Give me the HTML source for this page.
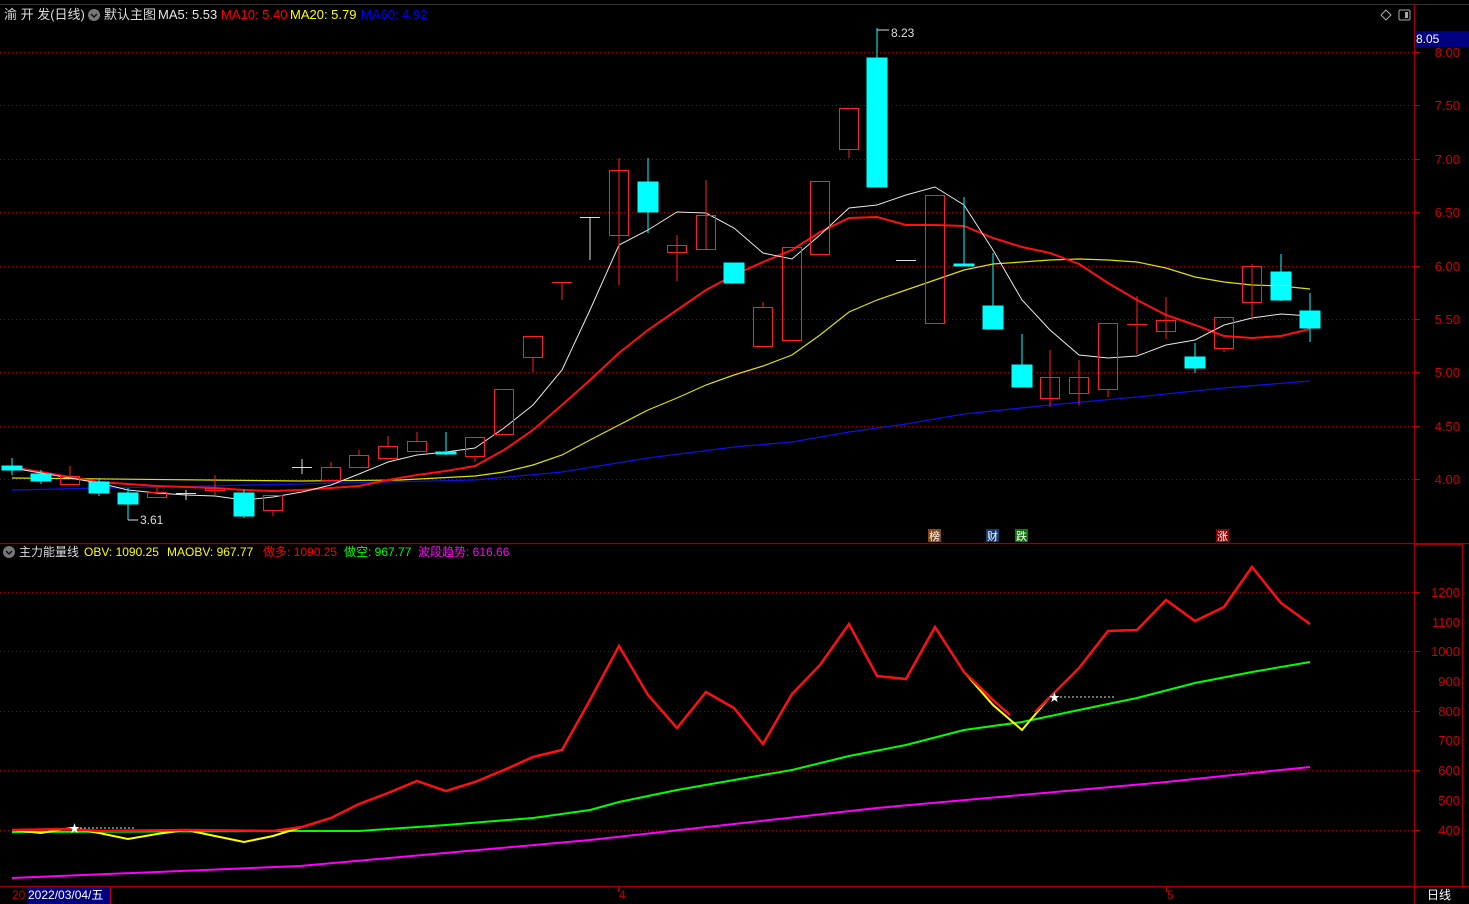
<!DOCTYPE html>
<html><head><meta charset="utf-8"><style>
body{margin:0;background:#000;width:1469px;height:904px;overflow:hidden;font-family:"Liberation Sans","Noto Sans CJK SC",sans-serif}
svg{display:block}
text{font-family:"Liberation Sans","Noto Sans CJK SC",sans-serif}
</style></head><body>
<svg width="1469" height="904" viewBox="0 0 1469 904">
<rect width="1469" height="904" fill="#000"/>
<line x1="0" y1="4.5" x2="1469" y2="4.5" stroke="#333"/>
<g stroke="#a00000" stroke-dasharray="1,3" stroke-width="1">
<line x1="0" x2="1414" y1="52.5" y2="52.5"/><line x1="0" x2="1414" y1="105.5" y2="105.5"/><line x1="0" x2="1414" y1="159.5" y2="159.5"/><line x1="0" x2="1414" y1="212.5" y2="212.5"/><line x1="0" x2="1414" y1="266.5" y2="266.5"/><line x1="0" x2="1414" y1="319.5" y2="319.5"/><line x1="0" x2="1414" y1="372.5" y2="372.5"/><line x1="0" x2="1414" y1="426.5" y2="426.5"/><line x1="0" x2="1414" y1="479.5" y2="479.5"/>
<line x1="0" x2="1414" y1="592.5" y2="592.5"/><line x1="0" x2="1414" y1="651.5" y2="651.5"/><line x1="0" x2="1414" y1="711.5" y2="711.5"/><line x1="0" x2="1414" y1="770.5" y2="770.5"/><line x1="0" x2="1414" y1="830.5" y2="830.5"/>
</g>
<g stroke="#a00000" stroke-width="1.2">
<line x1="1414.5" y1="4" x2="1414.5" y2="904"/>
<line x1="0" y1="543.5" x2="1469" y2="543.5"/>
<line x1="0" y1="886.5" x2="1469" y2="886.5"/>
<line x1="1462.5" y1="544" x2="1462.5" y2="886"/>
<line x1="1414" y1="544.5" x2="1462" y2="544.5"/>
</g>
<g stroke="#c00000">
<line x1="1414" x2="1420" y1="52.5" y2="52.5"/><line x1="1414" x2="1420" y1="105.5" y2="105.5"/><line x1="1414" x2="1420" y1="159.5" y2="159.5"/><line x1="1414" x2="1420" y1="212.5" y2="212.5"/><line x1="1414" x2="1420" y1="266.5" y2="266.5"/><line x1="1414" x2="1420" y1="319.5" y2="319.5"/><line x1="1414" x2="1420" y1="372.5" y2="372.5"/><line x1="1414" x2="1420" y1="426.5" y2="426.5"/><line x1="1414" x2="1420" y1="479.5" y2="479.5"/>
<line x1="1414" x2="1420" y1="592.5" y2="592.5"/><line x1="1414" x2="1420" y1="651.5" y2="651.5"/><line x1="1414" x2="1420" y1="711.5" y2="711.5"/><line x1="1414" x2="1420" y1="770.5" y2="770.5"/><line x1="1414" x2="1420" y1="830.5" y2="830.5"/>
</g>
<g fill="#d00000" font-size="13" text-anchor="end">
<text x="1460" y="57">8.00</text><text x="1460" y="110">7.50</text><text x="1460" y="164">7.00</text><text x="1460" y="217">6.50</text><text x="1460" y="271">6.00</text><text x="1460" y="324">5.50</text><text x="1460" y="377">5.00</text><text x="1460" y="431">4.50</text><text x="1460" y="484">4.00</text>
<text x="1460" y="597">1200</text><text x="1460" y="627">1100</text><text x="1460" y="656">1000</text><text x="1460" y="686">900</text><text x="1460" y="716">800</text><text x="1460" y="745">700</text><text x="1460" y="775">600</text><text x="1460" y="805">500</text><text x="1460" y="835">400</text>
</g>
<rect x="1415" y="31" width="54" height="16" fill="#000080"/>
<text x="1416" y="43" fill="#fff" font-size="12">8.05</text>
<text x="4" y="19" font-size="13" fill="#ddd">渝 开 发(日线)</text>
<circle cx="94" cy="15" r="6" fill="#777"/><path d="M91 14l3 3 3-3" stroke="#111" stroke-width="1.5" fill="none"/>
<text x="104" y="19" font-size="13" fill="#ddd">默认主图</text>
<text x="158" y="19" font-size="13" fill="#e8e8e8">MA5: 5.53</text>
<text x="221" y="19" font-size="13" fill="#f00">MA10: 5.40</text>
<text x="290" y="19" font-size="13" fill="#ff0">MA20: 5.79</text>
<text x="361" y="19" font-size="13" fill="#0000ff">MA60: 4.92</text>
<path d="M1386 10l5 5-5 5-5-5z" stroke="#aaa" fill="none"/>
<rect x="1399" y="10" width="11" height="10" rx="1.5" stroke="#aaa" fill="none"/><rect x="1405" y="12" width="3" height="6" fill="#aaa"/>
<polyline fill="none" stroke="#1010e0" stroke-width="1.3" points="12,490 300,484 475,480 562,472 648,458 734,447 792,442 849,432 906,424 964,414 1050,405 1137,397 1224,388 1310,381"/>
<polyline fill="none" stroke="#e0e000" stroke-width="1.2" points="12,478 300,481 400,480 475,476 504,472 533,465 562,455 590,440 619,425 648,410 677,398 706,385 734,375 763,366 792,355 820,335 849,312 877,300 906,290 935,280 964,270 993,264 1022,262 1050,260 1079,259 1108,260 1137,262 1166,268 1195,277 1224,282 1252,285 1281,286 1310,289"/>
<polyline fill="none" stroke="#ff1010" stroke-width="2" points="12,467 41,472 70,477 99,482 128,484 157,486 186,487 215,488 244,490 273,491 302,490 331,488 359,486 388,480 417,475 446,471 475,466 504,450 533,430 562,405 590,380 619,353 648,330 677,310 706,290 734,275 763,262 792,250 820,232 849,218 877,217 906,225 935,225 964,226 993,238 1022,247 1050,253 1079,264 1108,283 1137,300 1166,315 1195,325 1224,336 1252,338 1281,336 1310,329"/>
<polyline fill="none" stroke="#e8e8e8" stroke-width="1" points="12,468 41,473 70,478 99,483 128,490 157,493 186,495 215,496 244,500 273,497 302,492 331,485 359,474 388,462 417,455 446,452 475,448 504,428 533,405 562,370 590,310 619,245 648,230 677,212 706,213 734,228 763,253 792,259 820,235 849,208 877,205 906,195 935,187 964,205 993,250 1022,300 1050,330 1079,355 1108,358 1137,356 1166,345 1195,340 1224,325 1252,318 1281,314 1310,316"/>
<g stroke-width="1">
<g stroke="#0ff" fill="#0ff"><line x1="12" x2="12" y1="458" y2="475"/><rect x="2" y="466" width="20" height="4"/>
<line x1="41" x2="41" y1="470" y2="484"/><rect x="31" y="474" width="20" height="7"/>
<line x1="99" x2="99" y1="478" y2="496"/><rect x="89" y="482" width="20" height="11"/>
<line x1="128" x2="128" y1="488" y2="520"/><rect x="118" y="493" width="20" height="11"/>
<line x1="244" x2="244" y1="490" y2="518"/><rect x="234" y="493" width="20" height="23"/>
<line x1="446" x2="446" y1="432" y2="455"/><rect x="436" y="452" width="20" height="2"/>
<line x1="648" x2="648" y1="158" y2="233"/><rect x="638" y="182" width="20" height="30"/>
<rect x="724" y="263" width="20" height="20"/>
<line x1="877" x2="877" y1="28" y2="187"/><rect x="867" y="58" width="20" height="129"/>
<line x1="964" x2="964" y1="197" y2="265"/><rect x="954" y="264" width="20" height="2"/>
<line x1="993" x2="993" y1="253" y2="329"/><rect x="983" y="306" width="20" height="23"/>
<line x1="1022" x2="1022" y1="334" y2="387"/><rect x="1012" y="365" width="20" height="22"/>
<line x1="1195" x2="1195" y1="343" y2="373"/><rect x="1185" y="357" width="20" height="11"/>
<line x1="1281" x2="1281" y1="254" y2="301"/><rect x="1271" y="272" width="20" height="28"/>
<line x1="1310" x2="1310" y1="293" y2="342"/><rect x="1300" y="311" width="20" height="17"/>
</g>
<g stroke="#ff2020" fill="none">
<line x1="70" x2="70" y1="466" y2="476"/><rect x="60.5" y="476.5" width="19" height="8"/>
<rect x="147.5" y="492.5" width="19" height="5"/><line x1="157" x2="157" y1="488" y2="492"/>
<line x1="215" x2="215" y1="475" y2="495"/><rect x="205.5" y="488.5" width="19" height="2"/>
<line x1="273" x2="273" y1="510" y2="516"/><rect x="263.5" y="495.5" width="19" height="15"/>
<rect x="321.5" y="467.5" width="19" height="13"/><line x1="331" x2="331" y1="462" y2="467"/>
<rect x="349.5" y="455.5" width="19" height="12"/><line x1="359" x2="359" y1="450" y2="455"/>
<line x1="388" x2="388" y1="436" y2="446"/><rect x="378.5" y="446.5" width="19" height="12"/>
<line x1="417" x2="417" y1="432" y2="441"/><rect x="407.5" y="441.5" width="19" height="10"/>
<rect x="465.5" y="437.5" width="19" height="19"/><line x1="475" x2="475" y1="456" y2="462"/>
<rect x="494.5" y="389.5" width="19" height="45"/>
<rect x="523.5" y="336.5" width="19" height="21"/><line x1="533" x2="533" y1="357" y2="372"/>
<line x1="552" x2="572" y1="282.5" y2="282.5"/><line x1="562" x2="562" y1="282" y2="300"/>
<line x1="619" x2="619" y1="158" y2="285"/><rect x="609.5" y="170.5" width="19" height="65"/>
<line x1="677" x2="677" y1="235" y2="281"/><rect x="667.5" y="245.5" width="19" height="7"/>
<line x1="706" x2="706" y1="180" y2="250"/><rect x="696.5" y="215.5" width="19" height="34"/>
<line x1="763" x2="763" y1="302" y2="307"/><rect x="753.5" y="307.5" width="19" height="39"/>
<rect x="782.5" y="247.5" width="19" height="93"/>
<rect x="810.5" y="181.5" width="19" height="73"/>
<line x1="849" x2="849" y1="149" y2="158"/><rect x="839.5" y="108.5" width="19" height="41"/>
<rect x="925.5" y="195.5" width="19" height="128"/>
<line x1="1050" x2="1050" y1="350" y2="407"/><rect x="1040.5" y="377.5" width="19" height="21"/>
<line x1="1079" x2="1079" y1="360" y2="405"/><rect x="1069.5" y="377.5" width="19" height="16"/>
<line x1="1108" x2="1108" y1="389" y2="397"/><rect x="1098.5" y="323.5" width="19" height="66"/>
<line x1="1137" x2="1137" y1="296" y2="354"/><line x1="1127" x2="1147" y1="324.5" y2="324.5"/>
<line x1="1166" x2="1166" y1="297" y2="339"/><rect x="1156.5" y="320.5" width="19" height="11"/>
<line x1="1224" x2="1224" y1="348" y2="352"/><rect x="1214.5" y="317.5" width="19" height="31"/>
<line x1="1252" x2="1252" y1="264" y2="320"/><rect x="1242.5" y="266.5" width="19" height="36"/>
</g>
<g stroke="#ddd"><line x1="176" x2="196" y1="493.5" y2="493.5"/><line x1="186" x2="186" y1="490" y2="500"/>
<line x1="292" x2="312" y1="467.5" y2="467.5"/><line x1="302" x2="302" y1="459" y2="474"/>
<line x1="580" x2="600" y1="217.5" y2="217.5"/><line x1="590" x2="590" y1="217" y2="260"/>
<line x1="896" x2="916" y1="260.5" y2="260.5"/></g>
<line x1="1271" x2="1291" y1="285.5" y2="285.5" stroke="#ff0"/>
</g>
<text x="140" y="524" fill="#ddd" font-size="12">3.61</text><path d="M128 520h10" stroke="#ddd"/>
<text x="891" y="37" fill="#ddd" font-size="12">8.23</text><path d="M877 30h12" stroke="#ddd"/>
<rect x="928" y="529" width="13" height="13" fill="#8b4513"/><text x="929" y="540" font-size="11" fill="#fff">榜</text>
<rect x="986" y="529" width="13" height="13" fill="#123c6e"/><text x="987" y="540" font-size="11" fill="#fff">财</text>
<rect x="1015" y="529" width="13" height="13" fill="#0a7a0a"/><text x="1016" y="540" font-size="11" fill="#fff">跌</text>
<rect x="1216" y="529" width="13" height="13" fill="#8b0000"/><text x="1217" y="540" font-size="11" fill="#fff">涨</text>
<circle cx="9" cy="552" r="6" fill="#777"/><path d="M6 551l3 3 3-3" stroke="#111" stroke-width="1.5" fill="none"/>
<text x="19" y="556" font-size="12" fill="#ddd">主力能量线</text>
<text x="84" y="556" font-size="12" fill="#ff0">OBV: 1090.25</text>
<text x="167" y="556" font-size="12" fill="#ff0">MAOBV: 967.77</text>
<text x="263" y="556" font-size="12" fill="#f00">做多: 1090.25</text>
<text x="344" y="556" font-size="12" fill="#0f0">做空: 967.77</text>
<text x="418" y="556" font-size="12" fill="#f0f">波段趋势: 616.66</text>
<polyline fill="none" stroke="#ff00ff" stroke-width="2" points="12,878 300,866 590,840 877,808 1166,782 1310,767"/>
<polyline fill="none" stroke="#00ff00" stroke-width="2" points="12,832 300,831 359,831 446,825 533,818 590,810 619,802 677,790 734,780 792,770 849,756 906,745 964,730 1022,722 1079,710 1137,698 1195,683 1252,672 1310,662"/>
<polyline fill="none" stroke="#ffff00" stroke-width="2" points="12,830 41,833 70,828 99,833 128,839 157,834 186,830 215,836 244,842 273,836 302,827"/>
<polyline fill="none" stroke="#ffff00" stroke-width="2" points="964,672 993,705 1022,730 1050,697"/>
<polyline fill="none" stroke="#ff1010" stroke-width="2.5" points="12,830 70,829 99,831 186,830 273,831 302,827 331,818 359,804 388,793 417,781 446,791 475,782 504,770 533,757 562,750 590,700 619,646 648,695 677,728 706,692 734,708 763,744 792,694 820,665 849,624 877,676 906,679 935,627 964,672 993,700 1010,715"/>
<polyline fill="none" stroke="#ff1010" stroke-width="2.5" points="1035,712 1050,697 1079,668 1108,631 1137,630 1166,600 1195,621 1224,607 1252,567 1281,603 1310,624"/>
<path d="M80 828h55M1060 697h55" stroke="#ddd" stroke-dasharray="2,2"/>
<text x="69" y="832" font-size="11" fill="#fff">★</text><text x="1049" y="701" font-size="11" fill="#fff">★</text>
<text x="12" y="899" font-size="12" fill="#c00000">20</text>
<rect x="27" y="887" width="83" height="17" fill="#000080"/><line x1="110.5" y1="887" x2="110.5" y2="904" stroke="#c00000"/>
<text x="28" y="899" font-size="12" fill="#fff">2022/03/04/五</text>
<line x1="618.5" y1="887" x2="618.5" y2="892" stroke="#c00000"/><text x="619" y="899" font-size="12" fill="#c00000">4</text>
<line x1="1166.5" y1="887" x2="1166.5" y2="892" stroke="#c00000"/><text x="1167" y="899" font-size="12" fill="#c00000">5</text>
<text x="1427" y="899" font-size="12" fill="#fff">日线</text>
</svg>
</body></html>
